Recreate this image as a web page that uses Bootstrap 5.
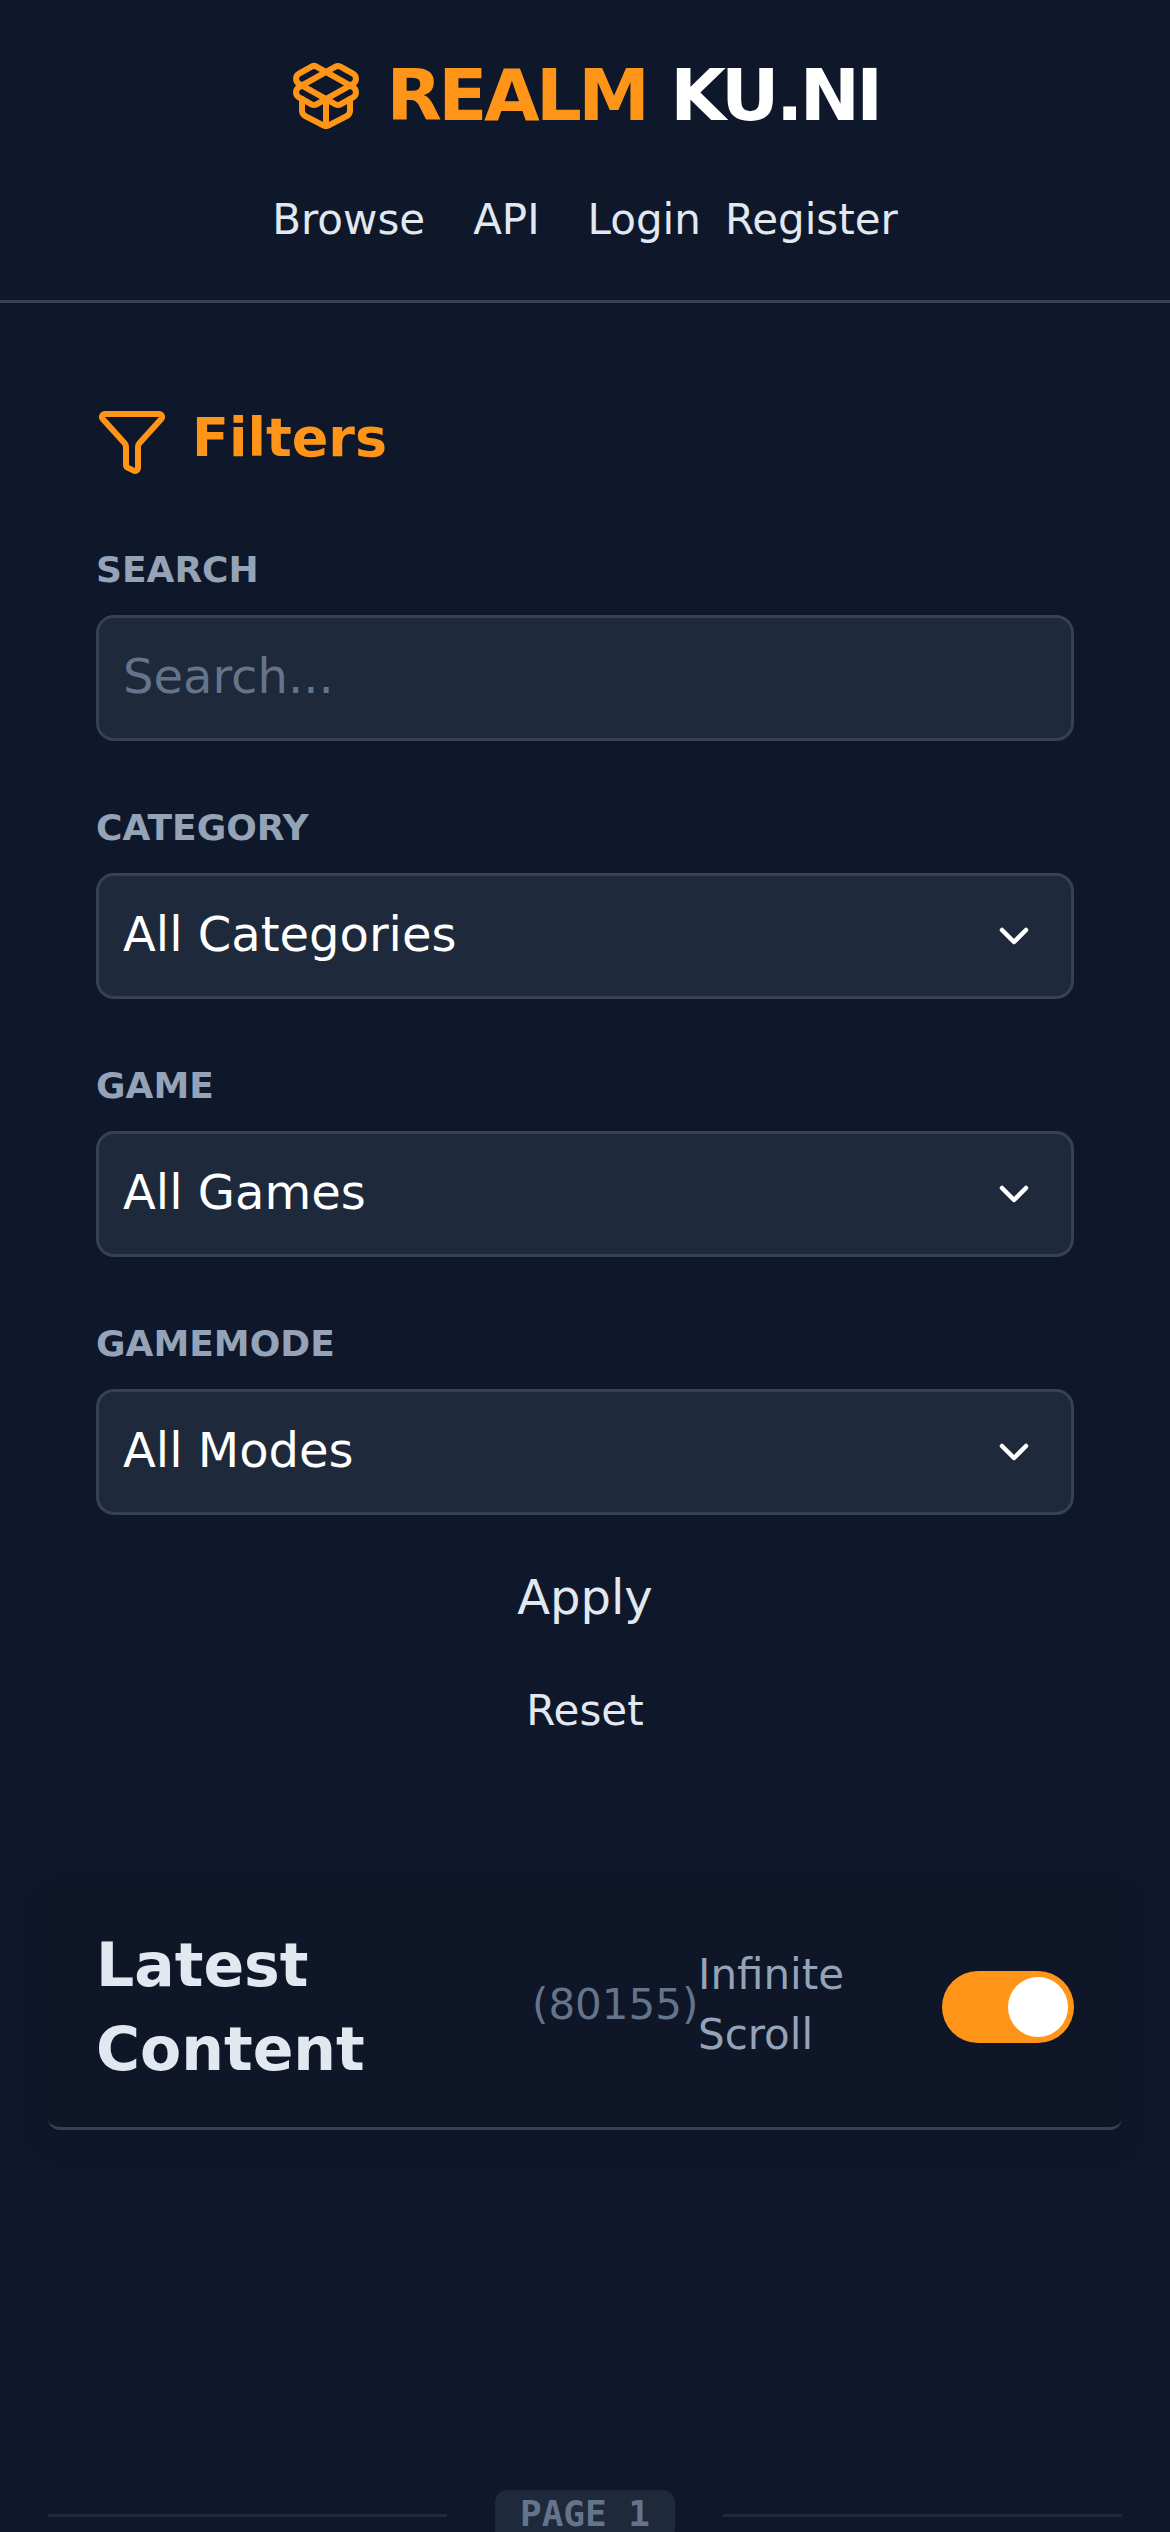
<!DOCTYPE html>
<html lang="en">
<head>
<meta charset="utf-8">
<meta name="viewport" content="width=device-width, initial-scale=1">
<title>Realm KU.NI</title>
<link href="https://cdn.jsdelivr.net/npm/bootstrap@5.3.0/dist/css/bootstrap.min.css" rel="stylesheet">
<style>
  :root { --accent: #ff9518; --line: #364153; --panel: #1e293b; --dim: #64748b; --soft: #94a3b8; --text: #e2e8f0; }
  body { background: #0f172a; color: var(--text); font-family: "DejaVu Sans", sans-serif; height: 2532px; overflow: hidden; }
  a { color: var(--text); text-decoration: none; }
  .ico { width: 72px; height: 72px; flex: none; fill: none; stroke: var(--accent); stroke-width: 2; stroke-linecap: round; stroke-linejoin: round; }
  .site-head { height: 303px; border-bottom: 3px solid var(--line); padding-top: 48px; }
  .brand { height: 96px; gap: 24px; margin-bottom: 46px; }
  .brand-name { font-size: 72px; line-height: 94px; padding-bottom: 2px; font-weight: 700; letter-spacing: -3.6px; word-spacing: 2.3px; color: #fff; }
  .accent { color: var(--accent); }
  .site-nav { font-size: 42px; line-height: 60px; gap: 48px; }
  .auth { gap: 24px; }
  .filters { padding: 102px 96px 0; }
  .filters-title { height: 72px; gap: 24px; margin-bottom: 69px; font-size: 54px; line-height: 64px; font-weight: 700; }
  .filters-title span { padding-bottom: 7px; }
  .field { margin-bottom: 63px; }
  .field:last-of-type { margin-bottom: 46px; }
  .field label { font-size: 36px; line-height: 48px; font-weight: 700; color: var(--soft); margin-bottom: 21px; display: block; }
  .field .form-control, .field .form-select { height: 126px; border: 3px solid var(--line); border-radius: 18px; background-color: var(--panel); color: #fff; font-size: 48px; line-height: 72px; padding: 22px 24px 26px; box-shadow: none; }
  .field .form-control::placeholder { color: var(--dim); opacity: 1; }
  .field .form-select { background-image: url("data:image/svg+xml,%3Csvg xmlns='http://www.w3.org/2000/svg' fill='none' viewBox='0 0 20 20'%3E%3Cpath stroke='%23fff' stroke-linecap='round' stroke-linejoin='round' stroke-width='1.5' d='m6 8 4 4 4-4'/%3E%3C/svg%3E"); background-size: 60px 60px; background-position: right 27px center; }
  .apply, .reset { border: 0; padding: 0; color: var(--text); }
  .apply { font-size: 48px; line-height: 72px; margin-bottom: 48px; }
  .reset { font-size: 42px; line-height: 60px; margin-bottom: 146px; }
  .list-head { margin: 0 48px 360px; height: 243px; padding: 36px 48px; border-bottom: 3px solid var(--line); border-radius: 0 0 12px 12px; background: #0e1628; box-shadow: 0 12px 30px rgba(8, 10, 24, .13); }
  .list-title { width: 436px; font-size: 60px; line-height: 84px; font-weight: 700; }
  .count { width: 166px; font-size: 42px; line-height: 60px; color: var(--dim); padding-bottom: 4px; }
  .scroll-label { width: 244px; font-size: 42px; line-height: 60px; color: var(--soft); padding-bottom: 4px; }
  .toggle { width: 132px; height: 72px; padding: 6px; border-radius: 36px; background: var(--accent); flex: none; }
  .knob { width: 60px; height: 60px; background: #fff; }
  .pager { margin: 0 48px; gap: 48px; }
  .rule { height: 3px; background: var(--panel); }
  .page-tag { width: 180px; height: 51px; border-radius: 12px; background: var(--panel); color: var(--dim); font: 700 36px/47px "DejaVu Sans Mono", monospace; }
</style>
<script src="https://cdn.jsdelivr.net/npm/bootstrap@5.3.0/dist/js/bootstrap.bundle.min.js"></script>
</head>
<body>
<header class="site-head d-flex flex-column align-items-center">
  <a href="#" class="brand d-flex align-items-center">
    <svg class="ico" viewBox="0 0 24 24"><path d="M12 22v-9"/><path d="M15.17 2.21a1.67 1.67 0 0 1 1.63 0L21 4.57a1.93 1.93 0 0 1 0 3.36L8.82 14.79a1.655 1.655 0 0 1-1.64 0L3 12.43a1.93 1.93 0 0 1 0-3.36z"/><path d="M20 13v3.87a2.06 2.06 0 0 1-1.11 1.83l-6 3.08a1.93 1.93 0 0 1-1.78 0l-6-3.08A2.06 2.06 0 0 1 4 16.87V13"/><path d="M21 12.43a1.93 1.93 0 0 0 0-3.36L8.83 2.2a1.64 1.64 0 0 0-1.63 0L3 4.57a1.93 1.93 0 0 0 0 3.36l12.18 6.86a1.636 1.636 0 0 0 1.63 0z"/></svg>
    <span class="brand-name text-nowrap"><span class="accent">REALM</span> KU.NI</span>
  </a>
  <nav class="site-nav d-flex">
    <a href="#">Browse</a>
    <a href="#">API</a>
    <div class="auth d-flex"><a href="#">Login</a><a href="#">Register</a></div>
  </nav>
</header>
<main>
  <form class="filters d-flex flex-column">
    <div class="filters-title accent d-flex align-items-center">
      <svg class="ico" viewBox="0 0 24 24"><path d="M10 20a1 1 0 0 0 .553.895l2 1A1 1 0 0 0 14 21v-7a2 2 0 0 1 .517-1.341L21.74 4.67A1 1 0 0 0 21 3H3a1 1 0 0 0-.742 1.67l7.225 7.989A2 2 0 0 1 10 14z"/></svg>
      <span>Filters</span>
    </div>
    <div class="field"><label for="q">SEARCH</label><input id="q" class="form-control" type="text" placeholder="Search..."></div>
    <div class="field"><label for="cat">CATEGORY</label><select id="cat" class="form-select"><option>All Categories</option></select></div>
    <div class="field"><label for="game">GAME</label><select id="game" class="form-select"><option>All Games</option></select></div>
    <div class="field"><label for="mode">GAMEMODE</label><select id="mode" class="form-select"><option>All Modes</option></select></div>
    <button type="button" class="btn apply">Apply</button>
    <button type="button" class="btn reset">Reset</button>
  </form>
  <section class="list-head d-flex align-items-center">
    <div class="list-title">Latest<br>Content</div>
    <div class="count text-nowrap">(80155)</div>
    <div class="scroll-label">Infinite<br>Scroll</div>
    <div class="toggle d-flex justify-content-end"><div class="knob rounded-circle"></div></div>
  </section>
  <div class="pager d-flex align-items-center">
    <div class="rule flex-fill"></div>
    <div class="page-tag text-center text-nowrap">PAGE 1</div>
    <div class="rule flex-fill"></div>
  </div>
</main>
</body>
</html>
